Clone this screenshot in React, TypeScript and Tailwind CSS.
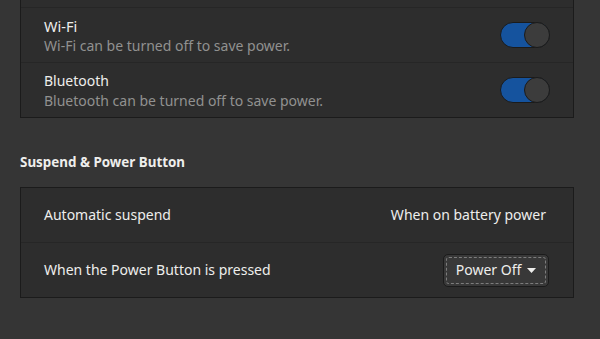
import React from "react";

function Switch() {
  return (
    <div className="relative h-[26px] w-[50px] rounded-full border border-[#1b1b1b] bg-[#15539e]">
      <div className="absolute right-[-1px] top-[-1px] h-[26px] w-[26px] rounded-full border border-[#1b1b1b] bg-[#3c3c3c]" />
    </div>
  );
}

export default function App() {
  return (
    <div
      className="h-[339px] w-[600px] overflow-hidden bg-[#353535] text-[#eeeeec]"
      style={{ fontFamily: '"Noto Sans", "Open Sans", sans-serif' }}
    >
      <div className="ml-[20px] w-[554px] border-x border-b border-[#1b1b1b] bg-[#2d2d2d]">
        <div className="h-[8px] border-b border-[#262626]" />
        <div className="flex h-[55px] items-center justify-between border-b border-[#262626] pl-[23px] pr-[23px]">
          <div className="mt-[2px] flex flex-col">
            <span className="text-[14.5px] leading-[20px]">Wi-Fi</span>
            <span className="text-[14px] leading-[20px] text-[#919190]">Wi-Fi can be turned off to save power.</span>
          </div>
          <Switch />
        </div>
        <div className="flex h-[54px] items-center justify-between pl-[23px] pr-[23px]">
          <div className="mt-[2px] flex flex-col">
            <span className="text-[14px] leading-[20px]">Bluetooth</span>
            <span className="text-[14px] leading-[20px] text-[#919190]">Bluetooth can be turned off to save power.</span>
          </div>
          <Switch />
        </div>
      </div>
      <div className="ml-[20px] mt-[34px] text-[13.4px] font-bold leading-[20px]">Suspend &amp; Power Button</div>
      <div className="ml-[20px] mt-[15px] w-[554px] border border-[#1b1b1b] bg-[#2d2d2d]">
        <div className="flex h-[55px] items-center justify-between border-b border-[#262626] pl-[23px] pr-[27px]">
          <span className="text-[14px] leading-[20px]">Automatic suspend</span>
          <span className="text-[14px] leading-[20px]">When on battery power</span>
        </div>
        <div className="flex h-[54px] items-center justify-between pl-[23px] pr-[24px]">
          <span className="text-[14px] leading-[20px]">When the Power Button is pressed</span>
          <div className="relative flex h-[33px] w-[106px] items-center justify-center gap-[6px] rounded-[5px] border border-[#1b1b1b] bg-[#383838]">
            <div className="absolute inset-[2px] rounded-[3px] border border-dashed border-[#7d7d7d]" />
            <span className="text-[14px] leading-[20px]">Power Off</span>
            <svg width="9" height="5" viewBox="0 0 9 5">
              <path d="M0 0 L9 0 L4.5 5 Z" fill="#eeeeec" />
            </svg>
          </div>
        </div>
      </div>
    </div>
  );
}
